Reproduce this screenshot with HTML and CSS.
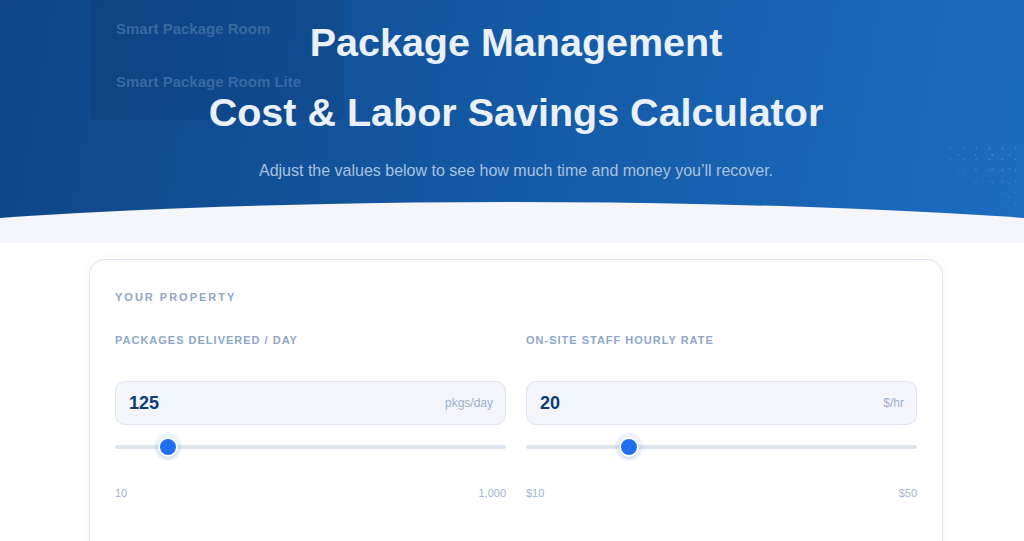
FILE: index.html
```html
<!DOCTYPE html>
<html lang="en">
  <head>
    <meta charset="UTF-8" />
    <meta name="viewport" content="width=device-width, initial-scale=1.0" />
    <title>Package Management Savings Calculator</title>
    <link rel="stylesheet" href="styles.css">
  </head>
  <body>
    <header class="hero">
      <ul class="menu">
        <li>Smart Package Room</li>
        <li>Smart Package Room Lite</li>
      </ul>

      <div class="hero-inner">
        <h1>
          <span>Package Management</span>
          <span>Cost &amp; Labor Savings Calculator</span>
        </h1>
        <p class="lead">Adjust the values below to see how much time and money you’ll recover.</p>
      </div>

      <div class="dots"></div>
    </header>

    <main class="page">
      <section class="card">
        <h3 class="card-title">Your Property</h3>

        <div class="fields">
          <div class="field">
            <label for="packages">Packages delivered / day</label>
            <div class="box">
              <input id="packages" type="text" value="125" />
              <span class="unit">pkgs/day</span>
            </div>
            <input class="slider" type="range" min="10" max="1000" value="125" data-for="packages" />
            <div class="range">
              <span>10</span>
              <span>1,000</span>
            </div>
          </div>

          <div class="field">
            <label for="rate">On-site staff hourly rate</label>
            <div class="box">
              <input id="rate" type="text" value="20" />
              <span class="unit">$/hr</span>
            </div>
            <input class="slider" type="range" min="10" max="50" value="20" data-for="rate" />
            <div class="range">
              <span>$10</span>
              <span>$50</span>
            </div>
          </div>
        </div>
      </section>
    </main>

    <script>
      document.querySelectorAll(".slider").forEach(function (slider) {
        slider.addEventListener("input", function () {
          document.getElementById(slider.dataset.for).value = slider.value;
        });
      });
    </script>
  </body>
</html>
```

FILE: styles.css
```css
* {
  box-sizing: border-box;
  margin: 0;
  padding: 0;
}

body {
  background-color: #ffffff;
  font-family: "Liberation Sans", Arial, sans-serif;
  overflow: hidden;
}

/* hero */

.hero {
  position: relative;
  height: 243px;
  overflow: hidden;
  background: linear-gradient(100deg, #0f4585 0%, #145aa6 50%, #1c6cbf 100%);
}

.hero::after {
  content: "";
  position: absolute;
  top: 202px;
  left: calc(50% - 1000px);
  width: 2000px;
  height: 226px;
  border-radius: 50%;
  background-color: #f4f6fb;
}

.hero-inner {
  position: relative;
  z-index: 2;
  padding: 7px 0 0 8px;
  text-align: center;
}

h1 {
  color: #eaf0f8;
  font-size: 39.5px;
  font-weight: bold;
  line-height: 70px;
}

h1 span {
  display: block;
}

.lead {
  margin-top: 12px;
  color: #aac1de;
  font-size: 16px;
  line-height: 24px;
}

.menu {
  position: absolute;
  top: 0;
  left: calc(50% - 423px);
  z-index: 1;
  width: 256px;
  height: 121px;
  padding-top: 2px;
  list-style: none;
  background-color: rgba(6, 28, 70, 0.12);
  border: 1px solid rgba(255, 255, 255, 0.03);
  border-top: none;
  border-radius: 0 0 6px 6px;
}

.menu li {
  padding: 0 26px;
  color: #3a68a2;
  font-size: 15px;
  font-weight: bold;
  line-height: 53px;
}

/* scattered dot texture, bottom right of the banner */
.dots {
  position: absolute;
  right: 0;
  bottom: 20px;
  width: 80px;
  height: 80px;
  opacity: 0.6;
  background-image:
    radial-gradient(circle, #4a8cf0 0.9px, transparent 1.2px),
    radial-gradient(circle, #4a8cf0 0.9px, transparent 1.2px);
  background-size: 13px 11px, 17px 14px;
  background-position: 0 0, 6px 5px;
  -webkit-mask-image: linear-gradient(215deg, #000 25%, transparent 70%);
  mask-image: linear-gradient(215deg, #000 25%, transparent 70%);
}

/* calculator card */

.page {
  padding: 16px 0 0 8px;
}

.card {
  width: 854px;
  min-height: 320px;
  margin: 0 auto;
  padding: 29px 25px;
  background-color: #ffffff;
  border: 1px solid #dfe5f1;
  border-radius: 16px;
  box-shadow: 0 2px 14px rgba(30, 60, 120, 0.05);
}

.card-title {
  color: #8ea6c8;
  font-size: 11px;
  font-weight: bold;
  letter-spacing: 2px;
  line-height: 16px;
  text-transform: uppercase;
}

.fields {
  display: grid;
  grid-template-columns: 1fr 1fr;
  gap: 20px;
  margin-top: 27px;
}

.field label {
  display: block;
  color: #8ea6c8;
  font-size: 11px;
  font-weight: bold;
  letter-spacing: 1px;
  line-height: 16px;
  text-transform: uppercase;
}

.box {
  display: flex;
  align-items: center;
  height: 44px;
  margin-top: 33px;
  padding: 0 12px 0 13px;
  background-color: #f3f5fb;
  border: 1px solid #dde3ef;
  border-radius: 10px;
}

.box input {
  flex: 1;
  min-width: 0;
  border: none;
  outline: none;
  background: transparent;
  color: #0e3a75;
  font-family: "Liberation Sans", Arial, sans-serif;
  font-size: 18px;
  font-weight: bold;
}

.unit {
  color: #9cb0cc;
  font-size: 12px;
}

.slider {
  display: block;
  width: 100%;
  height: 20px;
  margin-top: 12px;
  background: transparent;
  -webkit-appearance: none;
  appearance: none;
}

.slider::-webkit-slider-runnable-track {
  height: 4px;
  background-color: #dee4ee;
  border-radius: 2px;
}

.slider::-webkit-slider-thumb {
  width: 20px;
  height: 20px;
  margin-top: -8px;
  background-color: #1f6fee;
  border: 2px solid #ffffff;
  border-radius: 50%;
  box-shadow: 0 0 0 4px rgba(31, 111, 238, 0.08), 0 1px 3px rgba(20, 60, 140, 0.2);
  -webkit-appearance: none;
  appearance: none;
}

.range {
  display: flex;
  justify-content: space-between;
  margin-top: 28px;
  color: #9fb2cf;
  font-size: 11px;
  line-height: 16px;
}
```
